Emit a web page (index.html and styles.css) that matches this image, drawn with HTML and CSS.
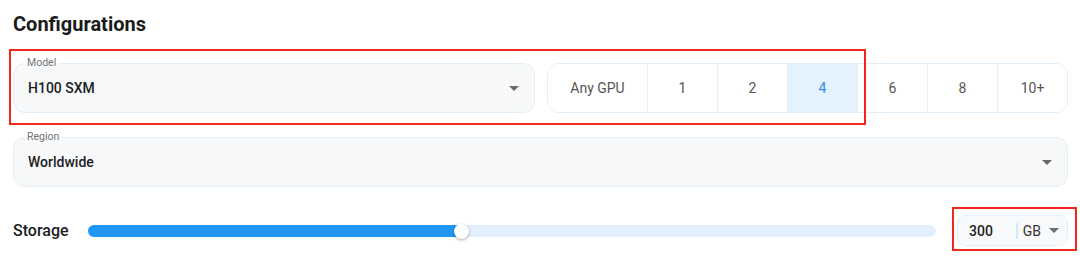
FILE: index.html
```html
<!DOCTYPE html>
<html lang="en">
<head>
    <meta charset="UTF-8">
    <meta name="viewport" content="width=device-width, initial-scale=1.0">
    <title>Configurations</title>
    <link rel="stylesheet" href="styles.css">
</head>
<body>
    <h2 class="title">Configurations</h2>

    <div class="row-top">
        <fieldset class="field">
            <legend>Model</legend>
            <span class="value">H100 SXM</span>
            <span class="caret"></span>
        </fieldset>
        <div class="gpu-group">
            <button class="gpu-btn gpu-any">Any GPU</button>
            <button class="gpu-btn">1</button>
            <button class="gpu-btn">2</button>
            <button class="gpu-btn selected">4</button>
            <button class="gpu-btn">6</button>
            <button class="gpu-btn">8</button>
            <button class="gpu-btn">10+</button>
        </div>
        <div class="highlight highlight-top"></div>
    </div>

    <fieldset class="field field-region">
        <legend>Region</legend>
        <span class="value">Worldwide</span>
        <span class="caret"></span>
    </fieldset>

    <div class="storage-row">
        <span class="storage-label">Storage</span>
        <div class="slider">
            <div class="slider-fill" style="width: 44%"></div>
            <div class="slider-thumb" style="left: 44%"></div>
        </div>
        <div class="storage-box">
            <span class="storage-value">300</span>
            <span class="storage-sep"></span>
            <span class="storage-unit">GB</span>
            <span class="caret"></span>
            <div class="highlight highlight-storage"></div>
        </div>
    </div>
</body>
</html>
```

FILE: styles.css
```css
html {
    height: 100%;
}
body {
    margin: 0;
    min-height: 100%;
    box-sizing: border-box;
    padding: 0 12px 24px 13px;
    font-family: Roboto, "Noto Sans", sans-serif;
    background-color: #fff;
    color: #1d1d1f;
}
.title {
    margin: 12px 0 0;
    font-size: 20px;
    line-height: 24px;
    font-weight: 700;
    color: #1b1b1b;
}

/* top row: model + gpu count */
.row-top {
    position: relative;
    display: grid;
    grid-template-columns: 522px 1fr;
    column-gap: 12px;
    margin-top: 21px;
    align-items: end;
}
.field {
    position: relative;
    margin: 0;
    padding: 0 14px;
    min-width: 0;
    height: 56px;
    box-sizing: border-box;
    border: 1px solid #e2eff9;
    border-radius: 12px;
    background-color: #f8f9fa;
    background-image: radial-gradient(#f0f1f3 0.6px, transparent 0.8px);
    background-size: 4px 4px;
    display: flex;
    align-items: center;
    justify-content: space-between;
}
.field legend {
    margin-left: -4px;
    padding: 0 3px;
    font-size: 10.5px;
    line-height: 12px;
    color: #757575;
}
.field .value {
    font-size: 14px;
    font-weight: 500;
    color: #1d1d1f;
    margin-top: -5px;
}
.field .caret {
    margin-top: -5px;
    margin-right: 1px;
}
.caret {
    width: 0;
    height: 0;
    border-left: 5px solid transparent;
    border-right: 5px solid transparent;
    border-top: 5px solid #6b6b6b;
}

.gpu-group {
    display: flex;
    height: 50px;
    box-sizing: border-box;
    border: 1px solid #e2eff9;
    border-radius: 12px;
    overflow: hidden;
    background-color: #fff;
}
.gpu-btn {
    width: 70px;
    border: none;
    border-left: 1px solid #e2eff9;
    background: #fff;
    font-family: Roboto, sans-serif;
    font-size: 14px;
    color: #555;
    padding: 0;
    cursor: pointer;
}
.gpu-btn.gpu-any {
    width: 99px;
    border-left: none;
}
.gpu-btn.selected {
    background-color: #e3f2fd;
    color: #2f8ee8;
}

.highlight {
    position: absolute;
    border: 2px solid #f0281c;
    pointer-events: none;
}
.highlight-top {
    left: -4px;
    top: -8px;
    width: 857px;
    height: 76px;
    box-sizing: border-box;
}

/* region */
.field-region {
    margin-top: 18px;
}

/* storage */
.storage-row {
    display: flex;
    align-items: center;
    margin-top: 28px;
}
.storage-label {
    width: 75px;
    flex: none;
    font-size: 16px;
    font-weight: 500;
    color: #1d1d1f;
}
.slider {
    position: relative;
    flex: 1;
    height: 12px;
    border-radius: 6px;
    background-color: #e1f0fc;
    margin-right: 21px;
}
.slider-fill {
    height: 100%;
    border-radius: 6px;
    background-color: #2196f3;
}
.slider-thumb {
    position: absolute;
    top: 50%;
    width: 15px;
    height: 15px;
    margin: -7px 0 0 -7px;
    border-radius: 50%;
    background-color: #fff;
    box-shadow: 0 1px 3px rgba(0, 0, 0, 0.35);
}
.storage-box {
    position: relative;
    flex: none;
    width: 111px;
    height: 31px;
    box-sizing: border-box;
    display: flex;
    align-items: center;
    padding: 0 8px 0 11px;
    border: 1px solid #e2eff9;
    border-radius: 8px;
    background-color: #f8f9fa;
}
.storage-value {
    width: 51px;
    font-size: 14px;
    font-weight: 500;
}
.storage-sep {
    width: 2px;
    height: 16px;
    background-color: #d3e8fa;
    margin-right: 5px;
}
.storage-unit {
    font-size: 14px;
    color: #333;
    margin-right: 8px;
}
.highlight-storage {
    left: -6px;
    top: -9px;
    right: -10px;
    bottom: -6px;
}
```
